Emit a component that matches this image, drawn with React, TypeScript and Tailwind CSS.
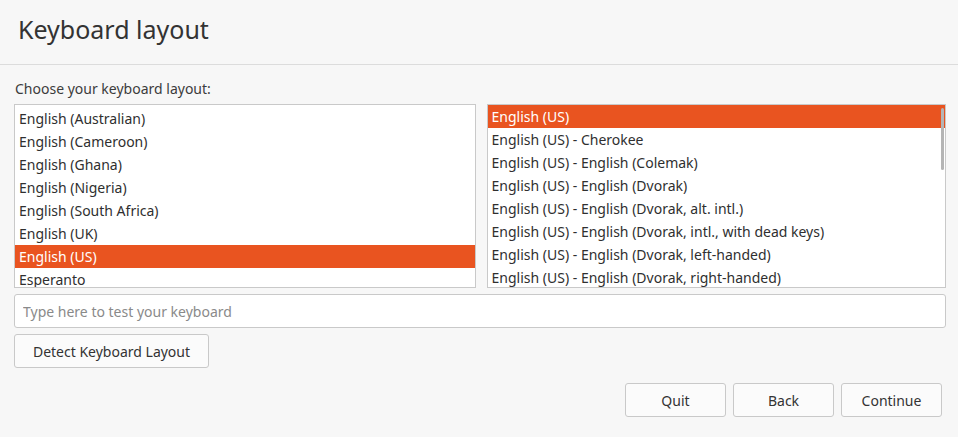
const LEFT = [
  "English (Australian)",
  "English (Cameroon)",
  "English (Ghana)",
  "English (Nigeria)",
  "English (South Africa)",
  "English (UK)",
  "English (US)",
  "Esperanto",
];

const RIGHT = [
  "English (US)",
  "English (US) - Cherokee",
  "English (US) - English (Colemak)",
  "English (US) - English (Dvorak)",
  "English (US) - English (Dvorak, alt. intl.)",
  "English (US) - English (Dvorak, intl., with dead keys)",
  "English (US) - English (Dvorak, left-handed)",
  "English (US) - English (Dvorak, right-handed)",
];

function LayoutList({
  items,
  selected,
  scrollbar,
  className,
}: {
  items: string[];
  selected: string;
  scrollbar?: boolean;
  className: string;
}) {
  return (
    <div className={`relative h-[184px] overflow-hidden bg-white border border-[#c9c9c9] ${className}`}>
      {items.map((item) => (
        <div
          key={item}
          className={`h-[23px] px-[4px] leading-[23px] text-[14px] whitespace-nowrap ${
            item === selected ? "bg-[#e95420] text-white" : "text-[#2f2f2f]"
          }`}
        >
          {item}
        </div>
      ))}
      {scrollbar && <div className="absolute right-[1px] top-[3px] w-[3px] h-[62px] rounded-full bg-[#b5b5b5]" />}
    </div>
  );
}

export default function App() {
  return (
    <div
      className="w-[958px] h-[437px] bg-[#f7f7f7] text-[#3c3c3c] flex flex-col"
      style={{ fontFamily: '"Noto Sans", "DejaVu Sans", sans-serif' }}
    >
      <div className="h-[65px] border-b border-[#dcdcdc] flex items-center px-[18px]">
        <h1 className="text-[25px] text-[#333] -mt-[5px]">Keyboard layout</h1>
      </div>
      <div className="flex flex-col pl-[14px] pr-[12px]">
        <p className="text-[14px] mt-[14px] mb-[5px] pl-[1px] leading-[20px]">Choose your keyboard layout:</p>
        <div className="flex gap-[11px]">
          <LayoutList className="w-[462px] pt-[2px]" items={LEFT} selected="English (US)" />
          <LayoutList className="w-[460px] pt-0" items={RIGHT} selected="English (US)" scrollbar />
        </div>
        <input
          className="mt-[6px] h-[34px] bg-white border border-[#c9c9c9] rounded-[3px] px-[8px] text-[14px] placeholder:text-[#8a8a8a] outline-none"
          placeholder="Type here to test your keyboard"
        />
        <div className="mt-[6px]">
          <button className="h-[34px] w-[195px] bg-[#fbfbfb] border border-[#c9c9c9] rounded-[3px] text-[14px] text-[#333]">
            Detect Keyboard Layout
          </button>
        </div>
        <div className="mt-[15px] flex justify-end gap-[7px] pr-[4px]">
          {["Quit", "Back", "Continue"].map((b) => (
            <button
              key={b}
              className="h-[34px] w-[101px] bg-[#fbfbfb] border border-[#c9c9c9] rounded-[3px] text-[14px] text-[#333]"
            >
              {b}
            </button>
          ))}
        </div>
      </div>
    </div>
  );
}
